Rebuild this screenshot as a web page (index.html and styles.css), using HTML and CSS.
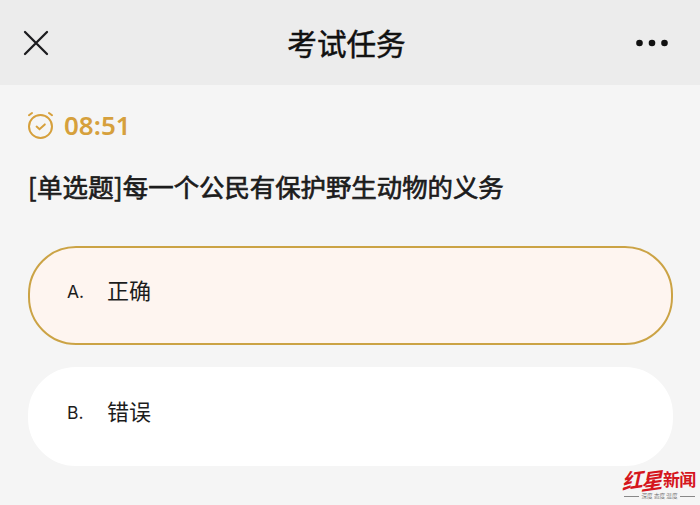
FILE: index.html
```html
<!DOCTYPE html>
<html lang="zh-CN">
<head>
    <meta charset="UTF-8">
    <meta name="viewport" content="width=device-width, initial-scale=1.0">
    <title>考试任务</title>
    <link rel="stylesheet" href="styles.css">
</head>
<body>
    <header class="header">
        <svg class="close" viewBox="0 0 26 26">
            <path d="M2 2 L24 24 M24 2 L2 24"/>
        </svg>
        <h1>考试任务</h1>
        <svg class="more" viewBox="0 0 32 8">
            <circle cx="3.5" cy="4" r="3.3"/>
            <circle cx="16" cy="4" r="3.3"/>
            <circle cx="28.5" cy="4" r="3.3"/>
        </svg>
    </header>
    <main class="container">
        <div class="timer">
            <svg class="clock" viewBox="0 0 26 28">
                <circle cx="12.5" cy="15.5" r="11.5"/>
                <path d="M1 4.2 L4 2 M21 2 L24 4.2" />
                <path d="M8.6 15.6 L11.5 18.2 L16.8 13.4"/>
            </svg>
            <span>08:51</span>
        </div>
        <h2><span class="tipo">[单选题]</span>每一个公民有保护野生动物的义务</h2>
        <ul class="options">
            <li class="option selected"><span class="letter">A.</span><span>正确</span></li>
            <li class="option"><span class="letter">B.</span><span>错误</span></li>
        </ul>
    </main>
    <div class="watermark">
        <div class="brand"><span class="brand-red">红</span><span class="brand-star">星</span><span class="brand-news">新闻</span></div>
        <div class="slogan"><span>深度 态度 温度</span></div>
    </div>
</body>
</html>
```

FILE: styles.css
```css
body {
    font-family: "Noto Sans CJK SC", sans-serif;
    margin: 0;
    height: 505px;
    overflow: hidden;
    background-color: #f5f5f5;
    color: #1c1c1c;
}

h1, h2 {
    margin: 0;
    font-weight: 400;
}

/* Barra superior */
.header {
    display: flex;
    align-items: center;
    justify-content: space-between;
    box-sizing: border-box;
    height: 85px;
    padding: 0 32px 0 23px;
    background-color: #ececec;
}

.header h1 {
    font-size: 29.6px;
    line-height: 40px;
    padding-left: 8px;
    color: #111;
    -webkit-text-stroke: 0.5px #111;
}

.close {
    width: 26px;
    height: 26px;
    fill: none;
    stroke: #1c1c1f;
    stroke-width: 2.3;
    stroke-linecap: round;
}

.more {
    width: 32px;
    height: 8px;
    fill: #111;
}

.container {
    padding: 24px 27px 0 28px;
}

.timer {
    display: flex;
    align-items: center;
    gap: 10px;
    height: 32px;
    color: #d6a03c;
    font-family: "Noto Sans", sans-serif;
    font-size: 26px;
    font-weight: 600;
}

.clock {
    width: 26px;
    height: 28px;
    fill: none;
    stroke: #d6a03c;
    stroke-width: 2;
    stroke-linecap: round;
}

h2 {
    margin-top: 25px;
    font-size: 25.4px;
    line-height: 40px;
    white-space: nowrap;
    -webkit-text-stroke: 0.7px #1c1c1c;
}

.tipo {
    letter-spacing: 0.3px;
}

/* Opciones */
.options {
    list-style: none;
    margin: 40px 0 0;
    padding: 0;
    display: grid;
    gap: 22px;
}

.option {
    display: flex;
    box-sizing: border-box;
    height: 99px;
    padding: 25px 0 0 37px;
    border: 2px solid #fff;
    border-radius: 48px;
    background-color: #fff;
    font-size: 22px;
    line-height: 32px;
}

.selected {
    border-color: #cba345;
    background-color: #fef5f0;
}

.letter {
    width: 40px;
    font-family: Inter, sans-serif;
    font-size: 17.5px;
    line-height: 38px;
}

/* Marca de agua sobre la pantalla */
.watermark {
    position: absolute;
    right: 5px;
    bottom: 6px;
    width: 71px;
}

.brand {
    display: flex;
    align-items: center;
    height: 24px;
    margin-bottom: 2px;
    color: #d5161d;
    font-weight: 700;
    white-space: nowrap;
}

.brand-red, .brand-star {
    font-size: 21px;
    line-height: 22px;
    font-weight: 700;
    transform: skew(-12deg, -8deg);
}

.brand-star {
    font-size: 22px;
    margin-left: -2px;
}

.brand-news {
    font-size: 17px;
    line-height: 20px;
    letter-spacing: -0.7px;
    margin-left: -2px;
}

.slogan {
    display: flex;
    align-items: center;
    height: 6px;
    color: #777;
    font-size: 5.6px;
    line-height: 6px;
    white-space: nowrap;
    gap: 2px;
}

.slogan::before, .slogan::after {
    content: "";
    flex: 1;
    height: 1px;
    background-color: #888;
}
```
